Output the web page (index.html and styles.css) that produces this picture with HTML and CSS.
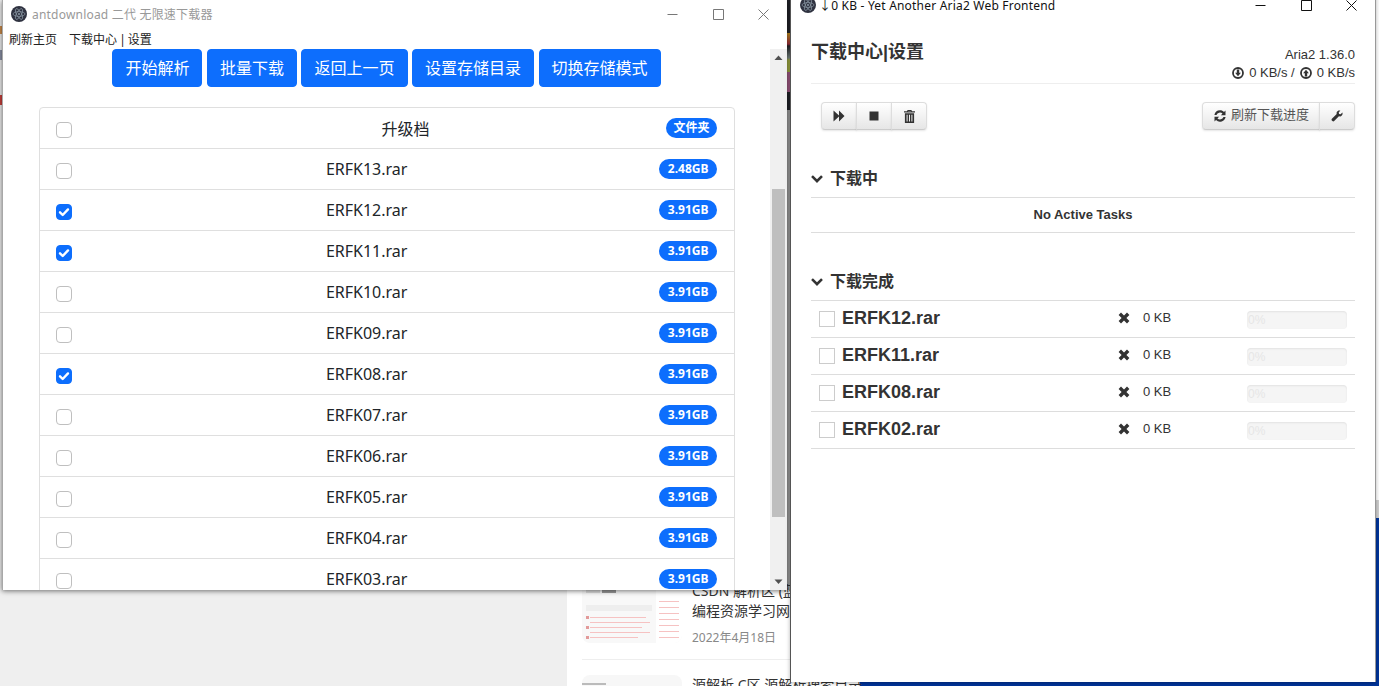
FILE: index.html
```html
<!DOCTYPE html>
<html lang="zh-CN">
<head>
<meta charset="utf-8">
<title>antdownload</title>
<link rel="stylesheet" href="styles.css">
</head>
<body>
<svg class="defs" width="0" height="0">
  <symbol id="logo" viewBox="0 0 16 16">
    <circle cx="8" cy="8" r="8" fill="#2f3240"/>
    <g fill="none" stroke="#8d9aa6" stroke-width=".7">
      <ellipse cx="8" cy="8" rx="6" ry="2.400"/>
      <ellipse cx="8" cy="8" rx="6" ry="2.400" transform="rotate(60 8 8)"/>
      <ellipse cx="8" cy="8" rx="6" ry="2.400" transform="rotate(120 8 8)"/>
    </g>
    <circle cx="8" cy="8" r="1" fill="#8d9aa6"/>
  </symbol>
  <symbol id="check" viewBox="0 0 16 16">
    <path d="M4 8.300l2.700 2.700L12 5.400" fill="none" stroke="#fff" stroke-width="2.400" stroke-linecap="round" stroke-linejoin="round"/>
  </symbol>
  <symbol id="chevron" viewBox="0 0 12 8">
    <path d="M1.900.3L6 4.300 10.100.3 11.900 2.100 6 7.900.1 2.100z" fill="#333"/>
  </symbol>
  <symbol id="cross" viewBox="0 0 12 12">
    <path d="M3 .6L6 3.600 9 .6l2.400 2.400-3 3 3 3L9 11.400l-3-3-3 3L.6 9l3-3-3-3z" fill="#333"/>
  </symbol>
</svg>

<main class="desktop">
  <div class="backdrop">
    <div class="left-edge"></div>
    <div class="pane-white"></div>
    <div class="pane-blue"></div>
    <div class="pane-thumb"></div>
    <div class="strip"></div>
    <div class="articles">
      <article class="article">
        <svg class="thumb" viewBox="0 0 100 62" aria-hidden="true">
          <rect width="100" height="62" fill="#f8f8f8"/>
          <rect x="74" width="26" height="62" fill="#fff"/>
          <rect x="4" y="4" width="48" height="1" fill="#bbb"/>
          <rect x="4" y="9" width="14" height="3" fill="#ddd"/>
          <rect x="20" y="9" width="14" height="3" fill="#999"/>
          <rect x="4" y="24" width="66" height="6" fill="#eee"/>
          <g fill="#f6c2c2">
            <rect x="8" y="36" width="56" height="1"/>
            <rect x="8" y="41" width="60" height="1"/>
            <rect x="8" y="46" width="52" height="1"/>
            <rect x="8" y="51" width="60" height="1"/>
            <rect x="8" y="56" width="48" height="1"/>
            <rect x="77" y="20" width="20" height="1"/>
            <rect x="77" y="26" width="20" height="1"/>
            <rect x="77" y="32" width="20" height="1"/>
            <rect x="77" y="38" width="20" height="1"/>
            <rect x="77" y="44" width="20" height="1"/>
            <rect x="77" y="50" width="20" height="1"/>
            <rect x="77" y="56" width="20" height="1"/>
          </g>
          <g fill="#e29a9a">
            <rect x="4" y="35" width="3" height="3"/>
            <rect x="4" y="45" width="3" height="3"/>
            <rect x="4" y="55" width="3" height="3"/>
          </g>
        </svg>
        <div class="article-text">
          <p class="article-title">CSDN 解析区 (蓝奏云 百度云) 资源下载站</p>
          <p class="article-title">编程资源学习网站合集</p>
          <p class="article-date">2022年4月18日</p>
        </div>
      </article>
      <article class="article">
        <svg class="thumb" viewBox="0 0 100 62" aria-hidden="true">
          <rect width="100" height="62" fill="#f7f7f7"/>
          <rect x="0" y="8" width="24" height="2" fill="#bbb"/>
        </svg>
        <div class="article-text">
          <p class="article-title">源解析 C区 源解析搜索目录</p>
        </div>
      </article>
    </div>
  </div>

  <section class="win win-a">
    <header class="win-a-title">
      <svg class="logo"><use href="#logo"/></svg>
      <span class="win-a-name">antdownload 二代 无限速下载器</span>
      <div class="controls controls-a">
        <svg viewBox="0 0 11 11"><path d="M.5 5.500h10"/></svg>
        <svg viewBox="0 0 11 11"><path d="M.5.5h10v10H.5z"/></svg>
        <svg viewBox="0 0 11 11"><path d="M.5.5l10 10M10.500.5l-10 10"/></svg>
      </div>
    </header>
    <nav class="menu"><a>刷新主页</a><a>下载中心 | 设置</a></nav>
    <div class="win-a-body">
      <div class="content">
        <div class="actions">
          <button class="btn-blue">开始解析</button>
          <button class="btn-blue">批量下载</button>
          <button class="btn-blue">返回上一页</button>
          <button class="btn-blue">设置存储目录</button>
          <button class="btn-blue">切换存储模式</button>
        </div>
        <ul class="files">
          <li class="file"><span class="box"></span><span class="file-name folder">升级档</span><span class="badge badge-folder">文件夹</span></li>
          <li class="file"><span class="box"></span><span class="file-name">ERFK13.rar</span><span class="badge">2.48GB</span></li>
          <li class="file"><span class="box on"><svg><use href="#check"/></svg></span><span class="file-name">ERFK12.rar</span><span class="badge">3.91GB</span></li>
          <li class="file"><span class="box on"><svg><use href="#check"/></svg></span><span class="file-name">ERFK11.rar</span><span class="badge">3.91GB</span></li>
          <li class="file"><span class="box"></span><span class="file-name">ERFK10.rar</span><span class="badge">3.91GB</span></li>
          <li class="file"><span class="box"></span><span class="file-name">ERFK09.rar</span><span class="badge">3.91GB</span></li>
          <li class="file"><span class="box on"><svg><use href="#check"/></svg></span><span class="file-name">ERFK08.rar</span><span class="badge">3.91GB</span></li>
          <li class="file"><span class="box"></span><span class="file-name">ERFK07.rar</span><span class="badge">3.91GB</span></li>
          <li class="file"><span class="box"></span><span class="file-name">ERFK06.rar</span><span class="badge">3.91GB</span></li>
          <li class="file"><span class="box"></span><span class="file-name">ERFK05.rar</span><span class="badge">3.91GB</span></li>
          <li class="file"><span class="box"></span><span class="file-name">ERFK04.rar</span><span class="badge">3.91GB</span></li>
          <li class="file"><span class="box"></span><span class="file-name">ERFK03.rar</span><span class="badge">3.91GB</span></li>
        </ul>
      </div>
      <div class="scrollbar">
        <svg class="arrow" viewBox="0 0 17 17"><path d="M4.500 11L8.500 6.500 12.500 11z"/></svg>
        <div class="scroll-track"><div class="scroll-thumb"></div></div>
        <svg class="arrow" viewBox="0 0 17 17"><path d="M4.500 6.500L8.500 11 12.500 6.500z"/></svg>
      </div>
    </div>
  </section>

  <section class="win win-b">
    <header class="win-b-title">
      <svg class="logo"><use href="#logo"/></svg>
      <span class="win-b-name">↓0 KB - Yet Another Aria2 Web Frontend</span>
      <div class="controls controls-b">
        <svg viewBox="0 0 11 11"><path d="M.5 5.500h10"/></svg>
        <svg viewBox="0 0 11 11"><path d="M.5.5h10v10H.5z"/></svg>
        <svg viewBox="0 0 11 11"><path d="M.5.5l10 10M10.500.5l-10 10"/></svg>
      </div>
    </header>
    <div class="aria">
      <div class="page-head">
        <h1 class="brand">下载中心|设置</h1>
        <div class="stats">
          <div>Aria2 1.36.0</div>
          <div class="speeds">
            <svg class="speed-icon" viewBox="0 0 12 12"><circle cx="6" cy="6" r="5" fill="none" stroke="#333" stroke-width="1.800"/><path d="M4.800 2.500h2.400v3.200h1.700L6 9.300 3.100 5.700h1.700z" fill="#333"/></svg>
            <span>0 KB/s /</span>
            <svg class="speed-icon" viewBox="0 0 12 12"><circle cx="6" cy="6" r="5" fill="none" stroke="#333" stroke-width="1.800"/><path d="M4.800 9.500h2.400V6.300h1.700L6 2.700 3.100 6.300h1.700z" fill="#333"/></svg>
            <span>0 KB/s</span>
          </div>
        </div>
      </div>
      <div class="toolbar">
        <div class="btn-group">
          <button class="tool tool-icon"><svg viewBox="0 0 12 12" class="glyph"><path d="M.5.5v11l5.500-5v5L11.500 6 6 .5v5z"/></svg></button>
          <button class="tool tool-icon"><svg viewBox="0 0 12 12" class="glyph"><path d="M1.500 1.500h9v9h-9z"/></svg></button>
          <button class="tool tool-icon"><svg viewBox="0 0 11 13" class="glyph-tall"><path d="M3.600 0h3.800l.6 1.300h3v1.200H0V1.300h3zM4.200 .9l-.2.4h3l-.2-.4zM.9 3.300h9.200V13H.9zM2.600 4.700v6.900h1V4.700zM5 4.700v6.900h1V4.700zM7.400 4.700v6.900h1V4.700z" fill-rule="evenodd"/></svg></button>
        </div>
        <div class="btn-group">
          <button class="tool tool-text"><svg viewBox="0 0 12 12" class="glyph"><path d="M6 .3c1.600 0 3 .6 4 1.700L11.500.6v4.700H6.900l1.600-1.700A3.700 3.700 0 0 0 2.500 5H.4A5.700 5.700 0 0 1 6 .3zM.5 6.700h4.600L3.500 8.400A3.700 3.700 0 0 0 9.500 7h2.100A5.700 5.700 0 0 1 2 10L.5 11.400z"/></svg><span class="tool-label">刷新下载进度</span></button>
          <button class="tool tool-wrench"><svg viewBox="0 0 12 12" class="glyph"><path d="M11.400 2.600c.5 1.500-.1 3-1.500 3.600-.7.300-1.400.3-2 .1L3.200 11.100c-.5.500-1.300.5-1.800 0l-.5-.5c-.5-.5-.5-1.300 0-1.800l4.800-4.700c-.2-.7-.2-1.400.1-2C6.400.700 7.900.1 9.400.6L7.700 2.400l.4 1.500 1.500.4z"/></svg></button>
        </div>
      </div>
      <h2 class="section-head"><svg class="chevron"><use href="#chevron"/></svg>下载中</h2>
      <div class="empty">No Active Tasks</div>
      <h2 class="section-head"><svg class="chevron"><use href="#chevron"/></svg>下载完成</h2>
      <div class="task"><span class="task-box"></span><span class="task-name">ERFK12.rar</span><svg class="cross"><use href="#cross"/></svg><span class="task-size">0 KB</span><span class="progress">0%</span></div>
      <div class="task"><span class="task-box"></span><span class="task-name">ERFK11.rar</span><svg class="cross"><use href="#cross"/></svg><span class="task-size">0 KB</span><span class="progress">0%</span></div>
      <div class="task"><span class="task-box"></span><span class="task-name">ERFK08.rar</span><svg class="cross"><use href="#cross"/></svg><span class="task-size">0 KB</span><span class="progress">0%</span></div>
      <div class="task"><span class="task-box"></span><span class="task-name">ERFK02.rar</span><svg class="cross"><use href="#cross"/></svg><span class="task-size">0 KB</span><span class="progress">0%</span></div>
    </div>
  </section>
</main>
</body>
</html>
```
FILE: styles.css
```css
* { box-sizing: border-box; }
html, body { margin: 0; height: 100%; overflow: hidden; }
body { font-family: "Noto Sans", "Noto Sans CJK SC", sans-serif; color: #212529; }
.defs { position: absolute; }

.desktop { position: relative; width: 1379px; height: 686px; overflow: hidden; background: #efefef; }

/* what shows behind the windows */
.backdrop { position: absolute; inset: 0; }
.left-edge { position: absolute; left: 0; top: 0; width: 2px; height: 590px;
  background: linear-gradient(#efefef 26px, #c98a4a 26px, #c98a4a 34px, #efefef 34px, #efefef 50px, #8a90a4 50px, #8a90a4 60px, #efefef 60px, #efefef 95px, #c8413b 95px, #c8413b 105px, #efefef 105px); }
.pane-white { position: absolute; left: 567px; top: 0; right: 0; bottom: 0; background: #fff; }
.pane-blue { position: absolute; left: 860px; top: 518px; right: 0; bottom: 0; background: #00349a; }
.pane-thumb { position: absolute; right: 0; top: 500px; width: 3px; height: 18px; background: #cfcfcf; }
.strip { position: absolute; left: 787px; top: 0; width: 4px; height: 590px;
  background: linear-gradient(#23242a 33px, #c2901e 33px, #a8323e 44px, #23242a 46px, #7d8a86 58px, #a3ad45 60px, #a3ad45 72px, #a35c86 72px, #a35c86 92px, #23242a 92px, #23242a 110px, #a0a0a0 110px); }
.articles { position: absolute; left: 582px; top: 581px; width: 400px; }
.article { display: flex; gap: 10px; padding-bottom: 16px; margin-bottom: 15px; border-bottom: 1px solid #eee; }
.article:last-child { border-bottom: 0; }
.thumb { flex: none; width: 100px; height: 62px; border-radius: 8px; }
.article-text { min-width: 0; height: 62px; }
.article-title { margin: 0; font-size: 14px; line-height: 20px; color: #333; white-space: nowrap; }
.article-date { margin: 7px 0 0; font-size: 12px; line-height: 20px; color: #888; }

/* windows */
.win { position: absolute; background: #fff; display: flex; flex-direction: column; }
.win-a { left: 2px; top: 0; width: 785px; height: 590px; border-left: 1px solid #a8a8a8; box-shadow: 0 1px 5px rgba(0,0,0,.55); }
.win-b { left: 790px; top: -9px; width: 586px; height: 691px; border-left: 1px solid #555; border-right: 1px solid #999; box-shadow: 0 1px 4px rgba(0,0,0,.3); }

.logo { width: 16px; height: 16px; flex: none; }
.controls { margin-left: auto; display: flex; gap: 34.5px; }
.controls svg { width: 11px; height: 11px; fill: none; stroke-width: 1; }
.controls-a svg { stroke: #777; }
.controls-b svg { stroke: #111; }
.controls-a { margin-right: 18px; }
.controls-b { margin-right: 18px; }

.win-a-title { height: 28px; flex: none; display: flex; align-items: center; padding-left: 8px; }
.win-a-name { margin-left: 5px; font-size: 12px; letter-spacing: .2px; color: #999; white-space: nowrap; }
.menu { height: 21px; flex: none; display: flex; align-items: center; gap: 12px; padding-left: 6px; font-size: 12px; word-spacing: -1px; color: #222; }
.win-a-body { flex: 1; min-height: 0; display: flex; overflow: hidden; }
.content { flex: 1; min-width: 0; overflow: hidden; }

.actions { display: flex; justify-content: center; gap: 4.5px; }
.btn-blue { height: 38px; padding: 0 12px; border: 1px solid #0d6efd; border-radius: 4px; background: #0d6efd; color: #fff; font: 16px/24px "Noto Sans", "Noto Sans CJK SC", sans-serif; }

.files { list-style: none; margin: 20px 35px 0 36px; padding: 0; border: 1px solid #dfdfdf; border-radius: 4px 4px 0 0; }
.file { height: 41px; display: flex; align-items: center; justify-content: space-between; padding: 0 17px 0 16px; border-bottom: 1px solid #dfdfdf; }
.box { flex: none; width: 16px; height: 16px; border: 1px solid #bfbfbf; border-radius: 4px; background: #fff; display: block; margin-top: 4px; }
.box.on { background: #0d6efd; border-color: #0d6efd; }
.box.on svg { display: block; width: 16px; height: 16px; margin: -1px; }
.file-name { font-size: 16px; line-height: 24px; margin-left: 2px; }
.folder { margin-left: 73px; margin-top: 1px; }
.badge { flex: none; height: 20px; padding: 0 8.5px; border-radius: 10px; background: #0d6efd; color: #fff; font-size: 12px; font-weight: 700; line-height: 20px; }
.badge-folder { padding: 0 7.5px; }

.scrollbar { flex: none; width: 17px; background: #f0f0f0; display: flex; flex-direction: column; }
.arrow { flex: none; width: 17px; height: 17px; fill: #505050; }
.scroll-track { flex: 1; padding: 123px 2px 0; }
.scroll-thumb { height: 328px; background: #bfbfbf; }

/* aria2 */
.win-b-title { height: 28px; flex: none; display: flex; align-items: center; padding-left: 9px; }
.win-b-name { margin-left: 3px; font-size: 12px; letter-spacing: .2px; color: #111; white-space: nowrap; }
.aria { padding: 0 20px; font: 13px/18px "Liberation Sans", "Noto Sans CJK SC", sans-serif; color: #333; }
.page-head { height: 65px; display: flex; justify-content: space-between; border-bottom: 1px solid #eee; }
.brand { margin: 23px 0 0; font-size: 18px; line-height: 20px; font-weight: 700; }
.stats { padding-top: 27px; text-align: right; }
.speeds { display: flex; justify-content: flex-end; align-items: center; gap: 5px; }
.speed-icon { width: 12px; height: 12px; }

.toolbar { display: flex; justify-content: space-between; margin-top: 18px; padding-left: 10px; }
.btn-group { display: flex; }
.tool { height: 28px; margin-left: -1px; border: 1px solid #ddd; border-bottom-color: #ccc; background: linear-gradient(#fff, #e6e6e6); box-shadow: 0 1px 2px rgba(0,0,0,.1); color: #333; font: inherit; padding: 0; display: flex; align-items: center; justify-content: center; }
.tool:first-child { margin-left: 0; border-radius: 4px 0 0 4px; }
.tool:last-child { border-radius: 0 4px 4px 0; }
.tool-icon { width: 36px; }
.tool-text { width: 118px; gap: 5px; justify-content: flex-start; padding-left: 11px; }
.tool-label { margin-top: -2px; color: #555; }
.tool-wrench { width: 36px; }
.glyph { width: 12px; height: 12px; fill: #333; flex: none; }
.glyph-tall { width: 11px; height: 13px; fill: #333; flex: none; }

.section-head { margin: 30px 0 0; height: 38px; display: flex; align-items: center; gap: 7px; border-bottom: 1px solid #ddd; font-size: 16px; font-weight: 700; color: #333; }
.chevron { width: 12px; height: 8px; flex: none; }
.empty { height: 35px; display: flex; align-items: center; justify-content: center; border-bottom: 1px solid #ddd; font-weight: 700; }
.task { height: 37px; display: flex; align-items: center; padding: 0 8px; border-bottom: 1px solid #ddd; }
.task-box { flex: none; width: 16px; height: 16px; border: 1px solid #ccc; background: #fff; margin-right: 7px; }
.task-name { width: 276px; margin-top: -2px; font-size: 18px; font-weight: 700; line-height: 24px; }
.cross { flex: none; width: 12px; height: 12px; margin: -2px 13px 0 0; }
.task-size { width: 104px; margin-top: -2px; }
.progress { flex: none; width: 100px; height: 18px; margin-top: 2px; padding-left: 1px; border-radius: 4px; background: #f5f5f5; box-shadow: inset 0 1px 2px rgba(0,0,0,.08); color: #e6e6e6; font-size: 12px; line-height: 18px; }
```
